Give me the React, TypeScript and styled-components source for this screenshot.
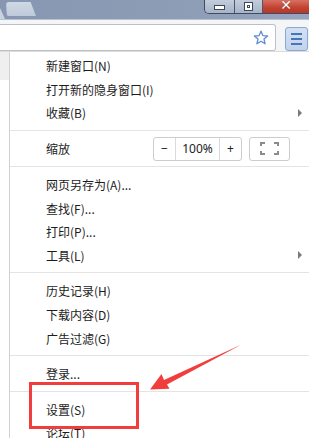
import React from 'react';
import styled, { createGlobalStyle } from 'styled-components';

const Global = createGlobalStyle`
  html, body {
    margin: 0;
    padding: 0;
    background: #ffffff;
  }
  body {
    font-family: "Noto Sans CJK SC", "Noto Sans", "Liberation Sans", sans-serif;
  }
`;

const Window = styled.div`
  position: relative;
  width: 309px;
  height: 438px;
  overflow: hidden;
  display: flex;
  flex-direction: column;
  background: #ffffff;
`;

const TitleBar = styled.div`
  height: 19px;
  flex: 0 0 19px;
  display: flex;
  align-items: flex-start;
  background: linear-gradient(90deg, #8797b1 0%, #8e9db6 60%, #97a6be 100%);
  border-bottom: 1px solid #b9c3d2;
`;

const TabEdge = styled.div`
  width: 5px;
  height: 11px;
  margin-top: 8px;
  background: #c9d2de;
  clip-path: polygon(0 0, 100% 100%, 0 100%);
`;

const Tab = styled.div`
  width: 30px;
  height: 14px;
  margin-top: 2px;
  margin-left: 1px;
  background: linear-gradient(#cfd8e4, #bfcada);
  border-radius: 3px 2px 0 3px;
  clip-path: polygon(0 0, 82% 0, 100% 100%, 3% 100%);
`;

const Controls = styled.div`
  margin-left: auto;
  display: flex;
  height: 13px;
  border: 1px solid #3f4b62;
  border-top: none;
  border-right: none;
  border-radius: 0 0 0 5px;
  overflow: hidden;
`;

const CtrlButton = styled.div<{ $w: number; $close?: boolean }>`
  width: ${p => p.$w}px;
  height: 13px;
  display: flex;
  align-items: center;
  justify-content: center;
  border-left: 1px solid #4c5870;
  background: ${p =>
    p.$close
      ? 'linear-gradient(#d77163, #c2412f 60%, #b7382a)'
      : 'linear-gradient(#c3cddb, #a6b4c9)'};
  &:first-child {
    border-left: none;
  }
`;

const MinGlyph = styled.div`
  width: 9px;
  height: 3px;
  margin-top: 2px;
  background: #ffffff;
  border: 1px solid #3e4659;
`;

const MaxGlyph = styled.div`
  width: 7px;
  height: 7px;
  border: 1px solid #3e4659;
  background: #ffffff;
  box-shadow: inset 0 0 0 2px #ffffff, inset 0 0 0 3px #3e4659;
`;

const CloseGlyph = styled.div`
  color: #ffffff;
  font-family: "DejaVu Sans", sans-serif;
  font-weight: bold;
  font-size: 14px;
  line-height: 10px;
  margin-top: -4px;
  text-shadow: 0 0 1px #6e1e15;
`;

const Toolbar = styled.div`
  flex: 0 0 32px;
  height: 32px;
  display: flex;
  align-items: flex-start;
  gap: 9px;
  padding: 4px 1px 0 0;
  box-sizing: border-box;
  background: #f4f5f7;
  border-bottom: 1px solid #dcdcdc;
`;

const AddressBar = styled.div`
  flex: 1;
  height: 27px;
  box-sizing: border-box;
  background: #ffffff;
  border: 1px solid #bcc1c8;
  border-left: none;
  border-radius: 0 3px 3px 0;
  display: flex;
  align-items: center;
  justify-content: flex-end;
  padding-right: 6px;
`;

const MenuButton = styled.div`
  width: 23px;
  height: 24px;
  margin-top: 3px;
  box-sizing: border-box;
  background: linear-gradient(#d3e0f2, #c1d3ec);
  border: 1px solid #8ba7d2;
  border-radius: 3px;
  display: flex;
  flex-direction: column;
  align-items: center;
  justify-content: center;
  gap: 3px;
`;

const MenuLine = styled.div`
  width: 11px;
  height: 2px;
  background: #4875b6;
`;

const Page = styled.div`
  flex: 1;
  display: flex;
  min-height: 0;
`;

const Gutter = styled.div`
  flex: 0 0 9px;
  background: linear-gradient(#efefef 0 28px, #ffffff 28px);
`;

const Menu = styled.div`
  flex: 1;
  background: #ffffff;
  border-left: 1px solid #d2d2d2;
  padding-top: 2px;
  display: flex;
  flex-direction: column;
`;

const Item = styled.div`
  flex: 0 0 23.6px;
  height: 23.6px;
  display: flex;
  align-items: center;
  padding: 0 7px 0 36px;
  font-size: 12px;
  color: #1c1c1c;
  white-space: nowrap;
`;

const SubArrow = styled.div`
  margin-left: auto;
  width: 0;
  height: 0;
  border-top: 4px solid transparent;
  border-bottom: 4px solid transparent;
  border-left: 4px solid #7a7a7a;
`;

const Separator = styled.div`
  flex: 0 0 1px;
  height: 1px;
  margin: 5px 0 6px;
  background: #e4e4e4;
`;

const ZoomRow = styled(Item)`
  flex: 0 0 24px;
  height: 24px;
`;

const ZoomLabel = styled.span`
  flex: 0 0 107px;
`;

const ZoomBox = styled.div`
  display: flex;
  height: 24px;
  box-sizing: border-box;
  border: 1px solid #cdcdcd;
  border-radius: 3px;
`;

const ZoomCell = styled.div<{ $w: number }>`
  width: ${p => p.$w}px;
  display: flex;
  align-items: center;
  justify-content: center;
  font-size: 12px;
  color: #222222;
  font-family: "Noto Sans", "Liberation Sans", sans-serif;
  & + & {
    border-left: 1px solid #dadada;
  }
`;

const FullBox = styled.div`
  width: 41px;
  height: 24px;
  margin-left: 7px;
  box-sizing: border-box;
  border: 1px solid #cdcdcd;
  border-radius: 3px;
  display: flex;
  align-items: center;
  justify-content: center;
`;

const Highlight = styled.div`
  position: absolute;
  left: 29px;
  top: 382px;
  width: 110px;
  height: 47px;
  box-sizing: border-box;
  border: 3px solid #f23d3d;
`;

const ArrowSvg = styled.svg`
  position: absolute;
  left: 0;
  top: 0;
  pointer-events: none;
`;

const Star = () => (
  <svg width="16" height="16" viewBox="0 0 16 16">
    <path
      d="M8 1.2 L9.9 5.6 L14.6 6 L11 9.1 L12.1 13.8 L8 11.3 L3.9 13.8 L5 9.1 L1.4 6 L6.1 5.6 Z"
      fill="none"
      stroke="#5d8bcb"
      strokeWidth="1.3"
      strokeLinejoin="round"
    />
  </svg>
);

const FullscreenIcon = () => (
  <svg width="19" height="13" viewBox="0 0 19 13">
    <path
      d="M1 4 V1 H5 M14 1 H18 V4 M18 9 V12 H14 M5 12 H1 V9"
      fill="none"
      stroke="#8c8c8c"
      strokeWidth="2"
    />
  </svg>
);

type Entry =
  | { kind: 'item'; label: string; sub?: boolean }
  | { kind: 'sep' }
  | { kind: 'zoom' };

const entries: Entry[] = [
  { kind: 'item', label: '新建窗口(N)' },
  { kind: 'item', label: '打开新的隐身窗口(I)' },
  { kind: 'item', label: '收藏(B)', sub: true },
  { kind: 'sep' },
  { kind: 'zoom' },
  { kind: 'sep' },
  { kind: 'item', label: '网页另存为(A)...' },
  { kind: 'item', label: '查找(F)...' },
  { kind: 'item', label: '打印(P)...' },
  { kind: 'item', label: '工具(L)', sub: true },
  { kind: 'sep' },
  { kind: 'item', label: '历史记录(H)' },
  { kind: 'item', label: '下载内容(D)' },
  { kind: 'item', label: '广告过滤(G)' },
  { kind: 'sep' },
  { kind: 'item', label: '登录...' },
  { kind: 'sep' },
  { kind: 'item', label: '设置(S)' },
  { kind: 'item', label: '论坛(T)' }
];

const App: React.FC = () => {
  return (
    <>
      <Global />
      <Window>
        <TitleBar>
          <TabEdge />
          <Tab />
          <Controls>
            <CtrlButton $w={29}>
              <MinGlyph />
            </CtrlButton>
            <CtrlButton $w={27}>
              <MaxGlyph />
            </CtrlButton>
            <CtrlButton $w={46} $close>
              <CloseGlyph>✕</CloseGlyph>
            </CtrlButton>
          </Controls>
        </TitleBar>
        <Toolbar>
          <AddressBar>
            <Star />
          </AddressBar>
          <MenuButton>
            <MenuLine />
            <MenuLine />
            <MenuLine />
          </MenuButton>
        </Toolbar>
        <Page>
          <Gutter />
          <Menu>
            {entries.map((e, i) => {
              if (e.kind === 'sep') return <Separator key={i} />;
              if (e.kind === 'zoom')
                return (
                  <ZoomRow key={i}>
                    <ZoomLabel>缩放</ZoomLabel>
                    <ZoomBox>
                      <ZoomCell $w={21}>−</ZoomCell>
                      <ZoomCell $w={43}>100%</ZoomCell>
                      <ZoomCell $w={21}>+</ZoomCell>
                    </ZoomBox>
                    <FullBox>
                      <FullscreenIcon />
                    </FullBox>
                  </ZoomRow>
                );
              return (
                <Item key={i}>
                  {e.label}
                  {e.sub && <SubArrow />}
                </Item>
              );
            })}
          </Menu>
        </Page>
        <Highlight />
        <ArrowSvg width="309" height="438" viewBox="0 0 309 438">
          <polygon
            points="150,389.5 161.5,374 164,380 241.5,344.5 167,384.5 169.5,388.8"
            fill="#f23d3d"
          />
        </ArrowSvg>
      </Window>
    </>
  );
};

export default App;
